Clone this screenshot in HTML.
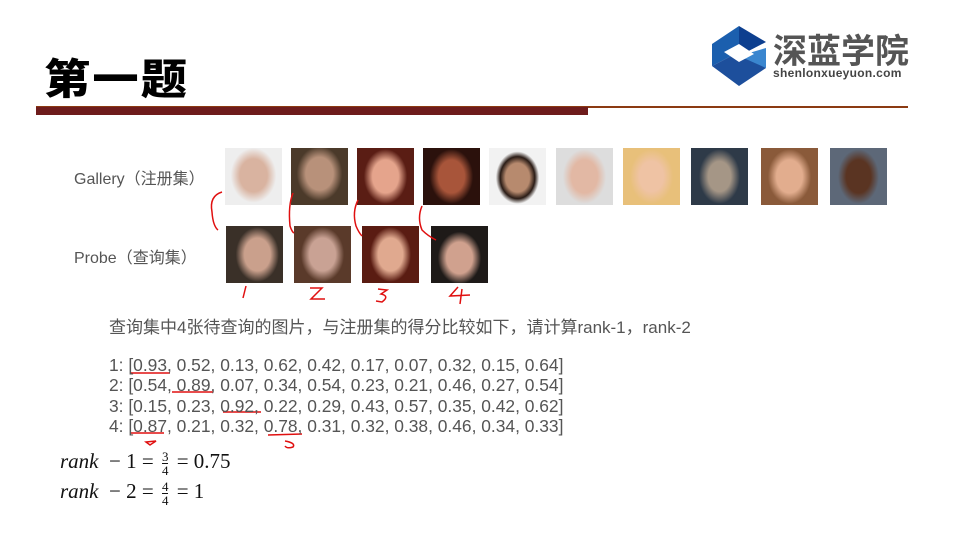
<!DOCTYPE html>
<html><head><meta charset="utf-8"><style>
body{margin:0;width:960px;height:540px;background:#fff;position:relative;overflow:hidden;font-family:"Liberation Sans","Noto Sans CJK SC",sans-serif}
.a{position:absolute}
.f{position:absolute;width:57px;height:57px}
.t{color:#555;font-size:16px}
.m{font-family:"Liberation Serif","DejaVu Serif",serif;font-size:21px;color:#111;white-space:nowrap}
.d{font-size:17.4px;color:#555;line-height:20.4px;white-space:nowrap}
.fr{display:inline-block;vertical-align:middle;font-size:13px;text-align:center;line-height:13px;margin:0 3px}
</style></head><body>
<div class="a" style="left:44px;top:46px;font-size:42px;font-weight:900;font-family:'Noto Sans CJK SC',sans-serif;letter-spacing:2px;color:#000;transform:scaleX(1.1);transform-origin:left">第一题</div>
<svg class="a" style="left:710px;top:26px" width="58" height="62" viewBox="0 0 58 62">
<polygon points="29,0 2,18 2,40 29,26" fill="#1b5fae"/>
<polygon points="29,0 56,16 29,30" fill="#0d3f8f"/>
<polygon points="2,40 29,26 56,42 29,60" fill="#1d4f9c"/>
<polygon points="29,30 56,42 56,22" fill="#3a86cf"/>
<polygon points="14,26 29,18 44,28 29,36" fill="#fff"/>
</svg>
<div class="a" style="left:773px;top:30px;font-size:34px;color:#555;font-weight:bold;font-family:'Noto Sans CJK SC',sans-serif;line-height:38px">深蓝学院</div>
<div class="a" style="left:773px;top:66px;font-size:12px;color:#444;font-weight:bold;letter-spacing:0.3px">shenlonxueyuon.com</div>
<div class="a" style="left:36px;top:106px;width:872px;height:2px;background:#8b3a12"></div>
<div class="a" style="left:36px;top:107px;width:552px;height:8px;background:#6e1c1c"></div>
<div class="a t" style="left:74px;top:165px">Gallery（注册集）</div>
<div class="a t" style="left:74px;top:244px">Probe（查询集）</div>

<div class="f" style="left:225px;top:148px;background:radial-gradient(ellipse 40% 48% at 50% 48%,#d9b3a0 60%,#eee 100%)"></div>
<div class="f" style="left:291px;top:148px;background:radial-gradient(ellipse 40% 48% at 50% 45%,#b8917a 60%,#4b3a2a 100%)"></div>
<div class="f" style="left:357px;top:148px;background:radial-gradient(ellipse 38% 48% at 50% 50%,#e5a48c 60%,#5a1d14 100%)"></div>
<div class="f" style="left:423px;top:148px;background:radial-gradient(ellipse 38% 48% at 50% 50%,#a8553a 60%,#2b110c 100%)"></div>
<div class="f" style="left:489px;top:148px;background:radial-gradient(ellipse 38% 46% at 50% 52%,#b78a6e 55%,#2a1c16 80%,#f2f2f2 100%)"></div>
<div class="f" style="left:556px;top:148px;background:radial-gradient(ellipse 38% 48% at 50% 50%,#e2b8a4 60%,#ddd 100%)"></div>
<div class="f" style="left:623px;top:148px;background:radial-gradient(ellipse 38% 48% at 50% 50%,#efc3a4 55%,#e8c07a 100%)"></div>
<div class="f" style="left:691px;top:148px;background:radial-gradient(ellipse 36% 48% at 50% 50%,#a59686 55%,#2e3a48 100%)"></div>
<div class="f" style="left:761px;top:148px;background:radial-gradient(ellipse 38% 48% at 50% 50%,#e2ad8e 60%,#8a5a3a 100%)"></div>
<div class="f" style="left:830px;top:148px;background:radial-gradient(ellipse 36% 48% at 50% 50%,#5a3422 60%,#5d6878 100%)"></div>

<div class="f" style="left:226px;top:226px;background:radial-gradient(ellipse 38% 48% at 55% 50%,#caa08c 60%,#3a3028 100%)"></div>
<div class="f" style="left:294px;top:226px;background:radial-gradient(ellipse 38% 48% at 50% 50%,#c9a294 60%,#5a3a2a 100%)"></div>
<div class="f" style="left:362px;top:226px;background:radial-gradient(ellipse 36% 48% at 50% 50%,#e0a98f 60%,#5a1c12 100%)"></div>
<div class="f" style="left:431px;top:226px;background:radial-gradient(ellipse 38% 46% at 50% 56%,#d0a18e 60%,#1e1a18 100%)"></div>

<svg class="a" style="left:0;top:0" width="960" height="540" fill="none" stroke="#e01010" stroke-width="1.5">
<path d="M222 192 Q209 196 212 212 Q213 226 218 230"/>
<path d="M293 193 Q288 205 290 226 Q292 232 294 233"/>
<path d="M358 200 Q352 212 356 226 Q359 233 362 236"/>
<path d="M422 206 Q417 218 422 230 Q428 236 436 240"/>
<path d="M246 286 L243 298"/>
<path d="M310 288 L322 288 L311 299 L325 299"/>
<path d="M378 289 L387 290 L381 294 Q390 296 382 302 L376 301"/>
<path d="M458 287 L450 296 L470 295 M462 289 L460 304"/>
<path d="M131 373 L170 373 M172 392 L213 392 M223 412 L261 412 M131 433 L164 433 M268 435 L302 434"/>
<path d="M146 442 L156 441 L150 445 Z M285 441 Q296 443 293 447 Q287 449 285 446"/>
</svg>

<div class="a" style="left:109px;top:313px;font-size:17px;color:#555;white-space:nowrap">查询集中4张待查询的图片，与注册集的得分比较如下，请计算rank-1，rank-2</div>
<div class="a d" style="left:109px;top:355px">1: [0.93, 0.52, 0.13, 0.62, 0.42, 0.17, 0.07, 0.32, 0.15, 0.64]<br>2: [0.54, 0.89, 0.07, 0.34, 0.54, 0.23, 0.21, 0.46, 0.27, 0.54]<br>3: [0.15, 0.23, 0.92, 0.22, 0.29, 0.43, 0.57, 0.35, 0.42, 0.62]<br>4: [0.87, 0.21, 0.32, 0.78, 0.31, 0.32, 0.38, 0.46, 0.34, 0.33]</div>
<div class="a m" style="left:60px;top:449px"><i>rank</i> &nbsp;− 1 = <span class="fr"><span style="border-bottom:1px solid #111;display:block">3</span>4</span> = 0.75</div>
<div class="a m" style="left:60px;top:479px"><i>rank</i> &nbsp;− 2 = <span class="fr"><span style="border-bottom:1px solid #111;display:block">4</span>4</span> = 1</div>
</body></html>
